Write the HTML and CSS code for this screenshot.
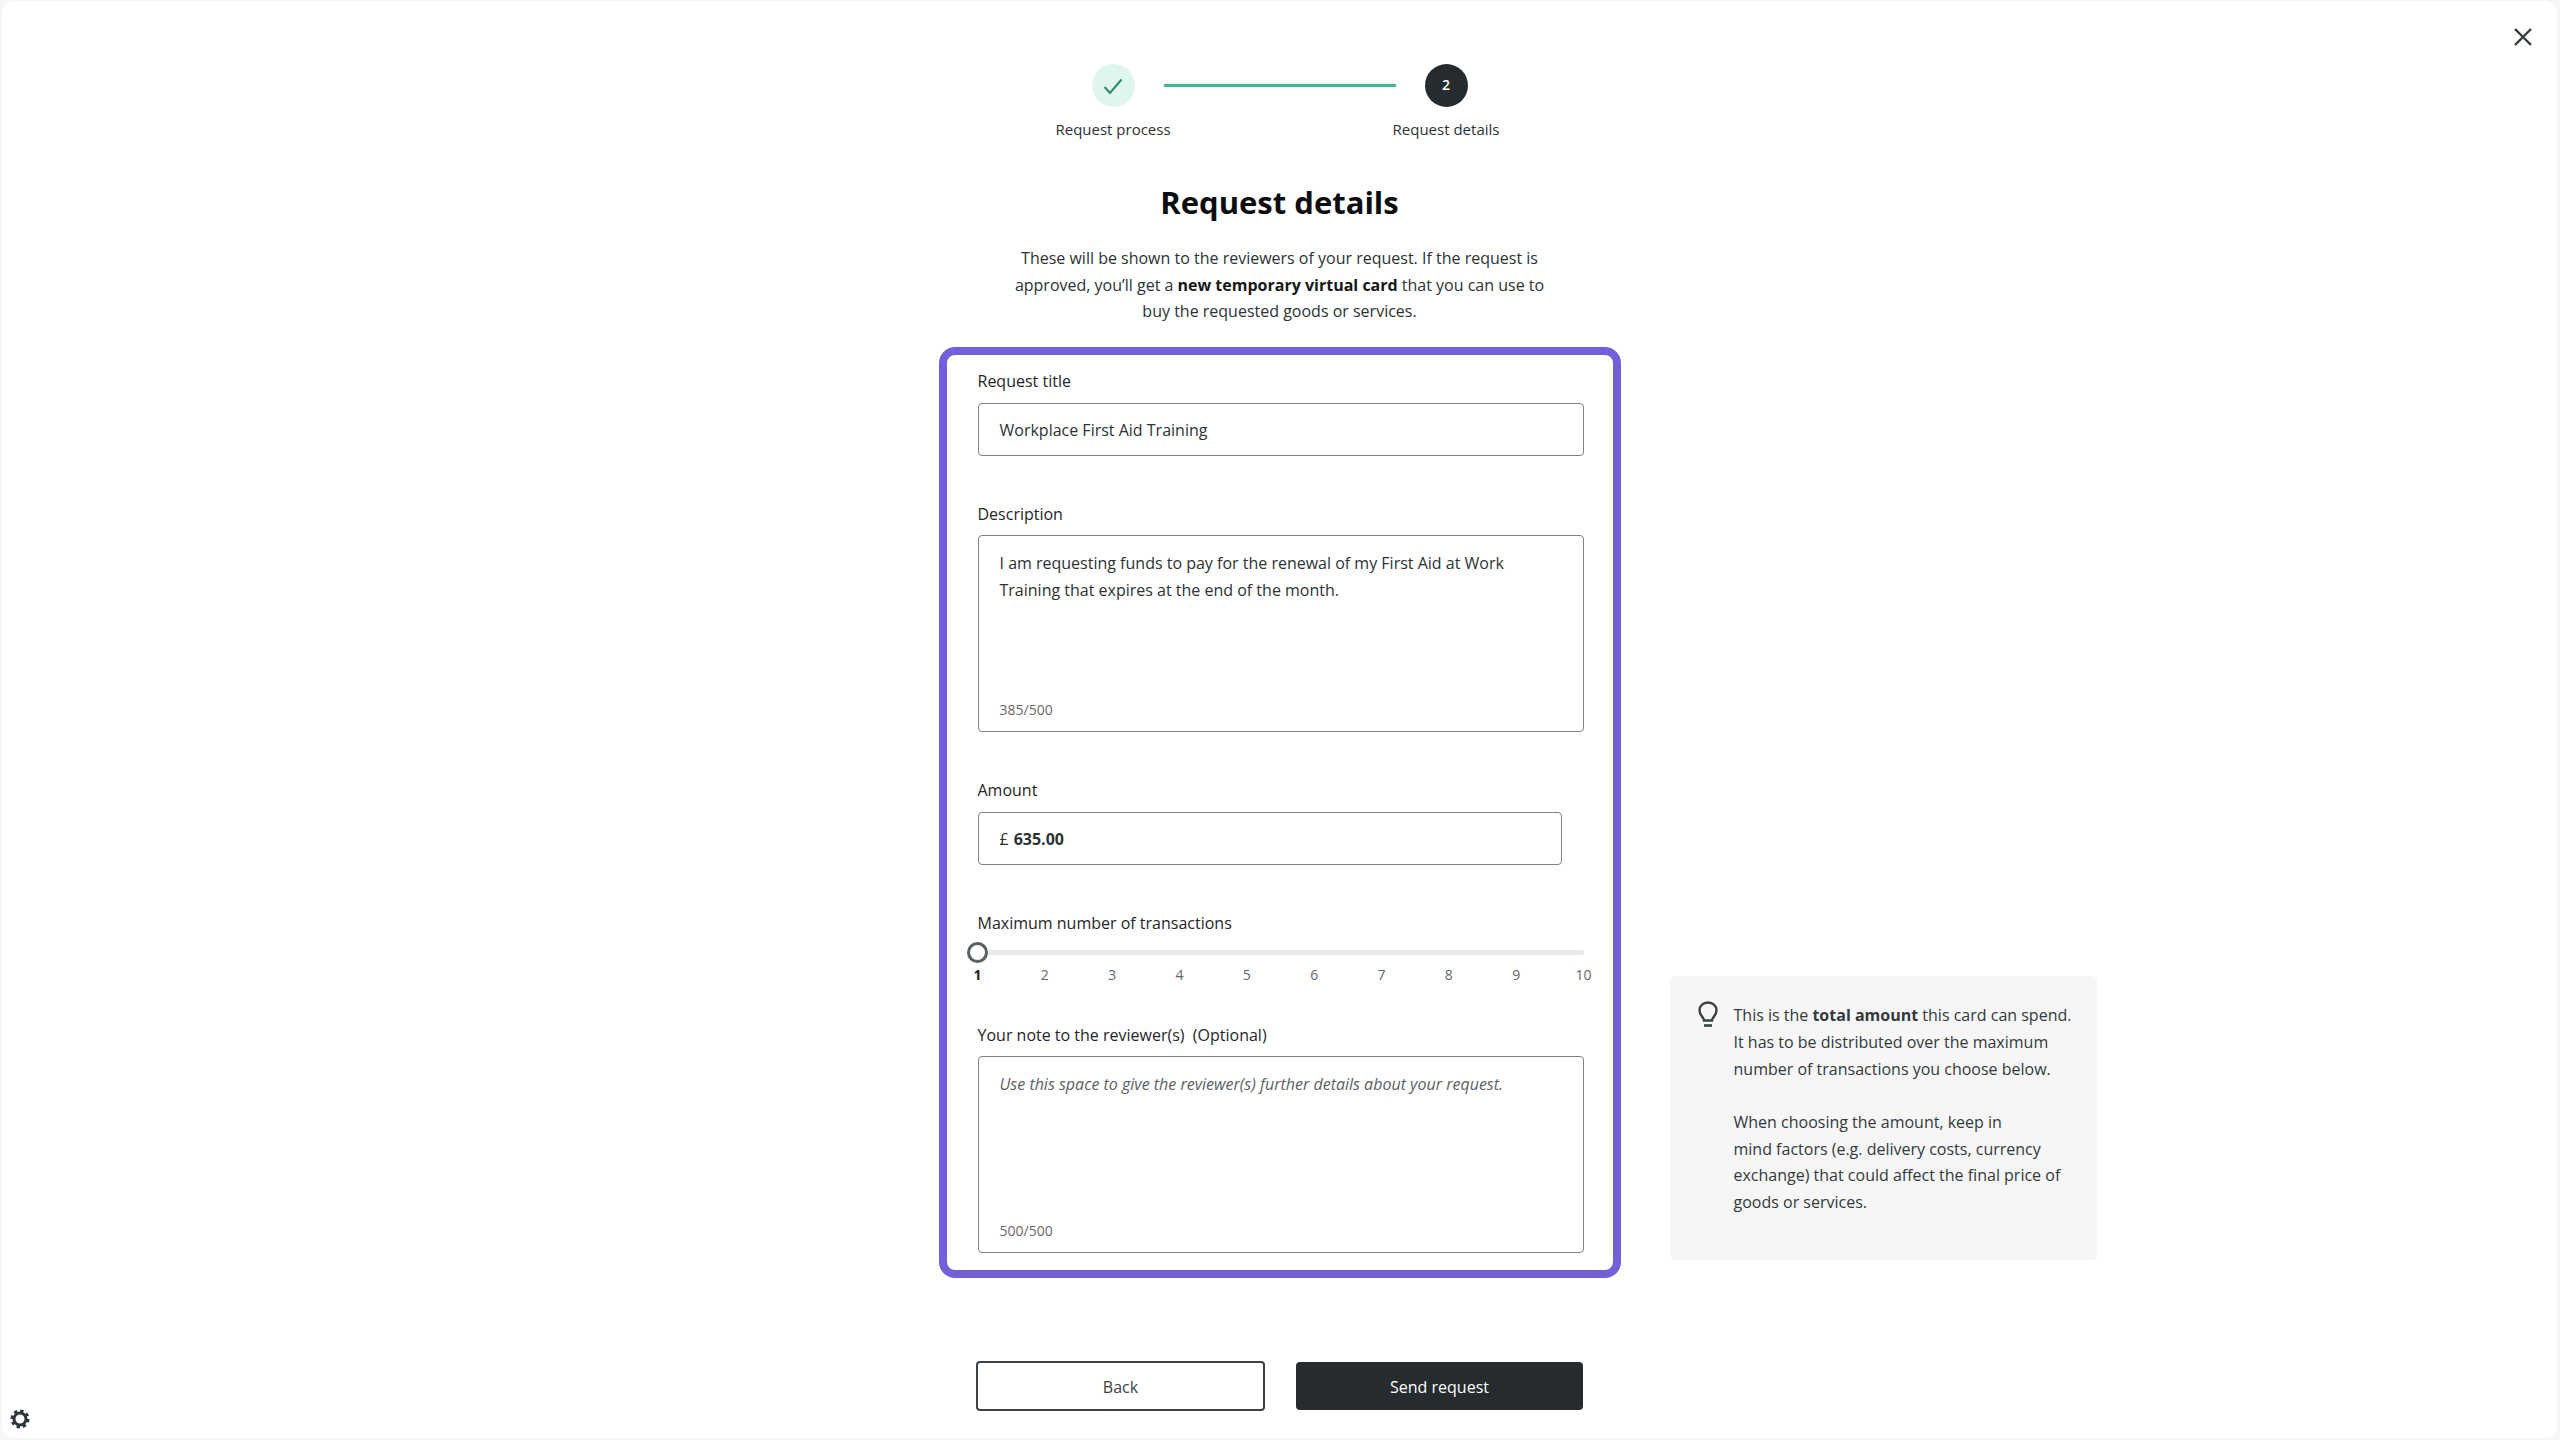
FILE: index.html
```html
<!DOCTYPE html>
<html lang="en">
<head>
  <meta charset="UTF-8" />
  <meta name="viewport" content="width=device-width, initial-scale=1.0" />
  <title>Request details</title>
  <link rel="stylesheet" href="styles.css">
</head>
<body>
  <div class="window">
    <button class="close" aria-label="Close">
      <svg width="20" height="20" viewBox="0 0 20 20"><path d="M2 2L18 18M18 2L2 18" fill="none" stroke="#33393c" stroke-width="2.4"/></svg>
    </button>

    <div class="steps">
      <div class="step">
        <div class="step-circle done">
          <svg width="20" height="20" viewBox="0 0 20 20"><path d="M1.5 11L7 17L18.5 3.5" fill="none" stroke="#2a8a6b" stroke-width="2"/></svg>
        </div>
        <span class="step-label">Request process</span>
      </div>
      <div class="step-line"></div>
      <div class="step">
        <div class="step-circle current">2</div>
        <span class="step-label">Request details</span>
      </div>
    </div>

    <h1>Request details</h1>
    <p class="intro">
      These will be shown to the reviewers of your request. If the request is<br>
      approved, you’ll get a <b>new temporary virtual card</b> that you can use to<br>
      buy the requested goods or services.
    </p>

    <div class="content">
      <form class="form-box">
        <div class="group">
          <div class="label">Request title</div>
          <div class="input">Workplace First Aid Training</div>
        </div>

        <div class="group">
          <div class="label">Description</div>
          <div class="textarea">
            <div>I am requesting funds to pay for the renewal of my First Aid at Work Training that expires at the end of the month.</div>
            <div class="counter">385/500</div>
          </div>
        </div>

        <div class="group">
          <div class="label">Amount</div>
          <div class="input amount"><span class="currency">£</span><b>635.00</b></div>
        </div>

        <div class="group group-slider">
          <div class="label">Maximum number of transactions</div>
          <div class="track"><div class="thumb"></div></div>
          <div class="ticks">
            <span class="tick active">1</span>
            <span class="tick">2</span>
            <span class="tick">3</span>
            <span class="tick">4</span>
            <span class="tick">5</span>
            <span class="tick">6</span>
            <span class="tick">7</span>
            <span class="tick">8</span>
            <span class="tick">9</span>
            <span class="tick">10</span>
          </div>
        </div>

        <div class="group group-last">
          <div class="label">Your note to the reviewer(s)&nbsp; (Optional)</div>
          <div class="textarea">
            <div class="placeholder">Use this space to give the reviewer(s) further details about your request.</div>
            <div class="counter">500/500</div>
          </div>
        </div>
      </form>

      <aside class="tip">
        <svg class="tip-icon" width="20" height="27" viewBox="0 0 20 27">
          <path d="M6 19.5C6 16 1.5 14.5 1.5 9.5C1.5 4.8 5.3 1.5 10 1.5C14.7 1.5 18.5 4.8 18.5 9.5C18.5 14.5 14 16 14 19.5Z" fill="none" stroke="#3a4043" stroke-width="2.4"/>
          <path d="M6 24.5H14" fill="none" stroke="#3a4043" stroke-width="2.6"/>
        </svg>
        <div class="tip-text">
          <p>This is the <b>total amount</b> this card can spend. It has to be distributed over the maximum number of transactions you choose below.</p>
          <p>When choosing the amount, keep in<br>mind factors (e.g. delivery costs, currency exchange) that could affect the final price of goods or services.</p>
        </div>
      </aside>
    </div>

    <div class="actions">
      <button class="btn btn-back">Back</button>
      <button class="btn btn-send">Send request</button>
    </div>

    <button class="settings" aria-label="Settings">
      <svg width="20" height="20" viewBox="0 0 20 20">
        <circle cx="10" cy="10" r="6" fill="none" stroke="#2f3538" stroke-width="3"/>
        <circle cx="10" cy="10" r="8" fill="none" stroke="#2f3538" stroke-width="3" stroke-dasharray="3.3 2.98"/>
      </svg>
    </button>
  </div>
</body>
</html>
```

FILE: styles.css
```css
* {
  box-sizing: border-box;
}

html, body {
  height: 100%;
}

body {
  margin: 0;
  background-color: #f6f6f6;
  font-family: "Open Sans", sans-serif;
  font-size: 16px;
  line-height: 26.67px;
  color: #2c3235;
}

b {
  font-weight: 700;
}

p {
  margin: 0;
}

.window {
  position: relative;
  height: 1437px;
  margin: 1px 3px 2px 2px;
  padding-top: 63px;
  background-color: #fff;
  border-radius: 12px;
  overflow: hidden;
}

.close, .settings {
  position: absolute;
  padding: 0;
  background: none;
  border: none;
  line-height: 0;
}

.close {
  top: 26px;
  right: 24px;
}

.settings {
  left: 8px;
  bottom: 9px;
}

/* stepper */
.steps {
  display: flex;
  justify-content: center;
}

.step {
  display: flex;
  flex-direction: column;
  align-items: center;
  width: 43px;
}

.step-circle {
  display: flex;
  justify-content: center;
  align-items: center;
  width: 43px;
  height: 43px;
  border-radius: 50%;
  font-size: 14px;
  font-weight: 600;
}

.step-circle.done {
  background-color: #dff6ee;
}

.step-circle.current {
  background-color: #252b2e;
  color: #fff;
}

.step-label {
  margin-top: 12px;
  font-size: 15px;
  line-height: 20px;
  white-space: nowrap;
}

.step-line {
  width: 232px;
  height: 3px;
  margin: 20px 29px 0;
  background-color: #3fb796;
}

h1 {
  margin: 41px 0 21px;
  font-size: 31px;
  font-weight: 700;
  line-height: 44px;
  text-align: center;
  color: #0b0d0e;
}

.intro {
  margin-bottom: 22px;
  text-align: center;
}

.intro b {
  color: #14181a;
}

/* form + tip */
.content {
  display: grid;
  grid-template-columns: 1fr 682px 1fr;
}

.form-box {
  grid-column: 2;
  padding: 13px 29px 17px 31px;
  border: 8px solid #7360d8;
  border-radius: 16px;
}

.group {
  margin-bottom: 45px;
}

.group-slider {
  margin-bottom: 37px;
}

.group-last {
  margin-bottom: 0;
}

.label {
  margin-bottom: 8px;
  font-weight: 500;
  color: #1f2528;
}

.input, .textarea {
  border: 1px solid #7d8284;
  border-radius: 4px;
  padding-left: 21px;
  padding-right: 21px;
}

.input {
  display: flex;
  align-items: center;
  height: 53px;
  padding-top: 2px;
}

.amount {
  width: 584px;
}

.currency {
  margin-right: 5px;
}

.textarea {
  display: flex;
  flex-direction: column;
  justify-content: space-between;
  height: 197px;
  padding-top: 14px;
  padding-bottom: 11px;
}

.counter {
  font-size: 14px;
  line-height: 20px;
  color: #65696c;
}

.placeholder {
  font-style: italic;
  color: #5c6164;
}

.track {
  position: relative;
  height: 5px;
  margin-top: 13px;
  background-color: #e9e9e9;
  border-radius: 3px;
}

.thumb {
  position: absolute;
  top: -8px;
  left: -11px;
  width: 21px;
  height: 21px;
  background-color: #fff;
  border: 3px solid #596064;
  border-radius: 50%;
}

.ticks {
  display: flex;
  justify-content: space-between;
  margin-top: 10px;
}

.tick {
  display: flex;
  justify-content: center;
  width: 0;
  font-size: 14px;
  line-height: 20px;
  color: #62676a;
}

.tick.active {
  font-weight: 700;
  color: #1f2528;
}

.tip {
  grid-column: 3;
  align-self: end;
  display: flex;
  gap: 16px;
  width: 427px;
  height: 284px;
  margin: 0 0 18px 49px;
  padding: 26px 20px 0 28px;
  background-color: #f6f6f7;
  border-radius: 6px;
  color: #33393c;
}

.tip-icon {
  flex-shrink: 0;
  margin-top: -1px;
}

.tip-text p + p {
  margin-top: 26.67px;
}

/* footer buttons */
.actions {
  display: flex;
  align-items: center;
  gap: 31px;
  width: 607px;
  margin: 83px auto 0;
}

.btn {
  font-family: inherit;
  font-size: 16px;
  padding: 2px 0 0;
  border-radius: 4px;
}

.btn-back {
  width: 289px;
  height: 50px;
  background-color: #fff;
  border: 2px solid #3c4245;
  color: #3c4245;
}

.btn-send {
  width: 287px;
  height: 48px;
  background-color: #252b2e;
  border: none;
  color: #fff;
}
```
